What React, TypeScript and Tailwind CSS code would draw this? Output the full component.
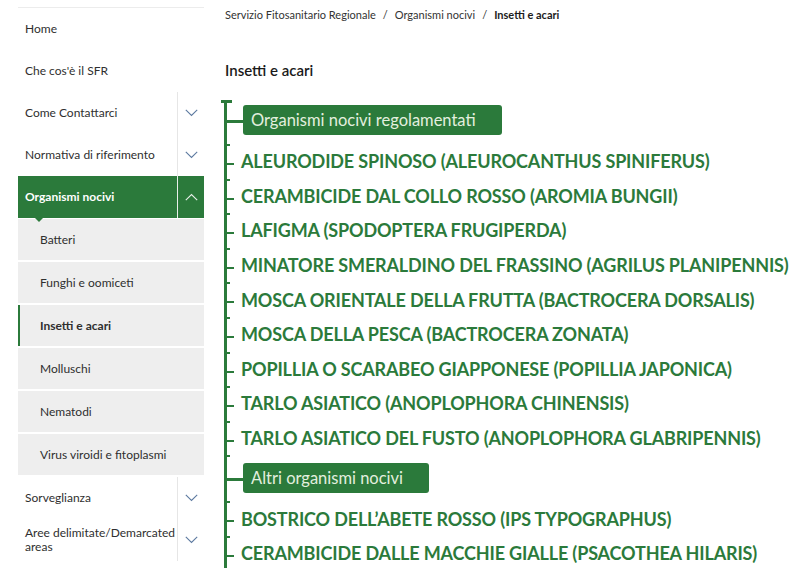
import React from "react";

function Chevron({ up = false, light = false }: { up?: boolean; light?: boolean }) {
  return (
    <svg width="13" height="8" viewBox="0 0 13 8" fill="none">
      <path
        d={up ? "M0.8 7.2 L6.5 1.5 L12.2 7.2" : "M0.8 0.8 L6.5 6.5 L12.2 0.8"}
        stroke={light ? "#e8efe9" : "#5d7aa0"}
        strokeWidth="1.1"
      />
    </svg>
  );
}

function NavRow({ label, chevron = false, second }: { label: string; chevron?: boolean; second?: string }) {
  return (
    <div className="flex h-[42px] items-stretch">
      <div className="flex flex-1 items-center whitespace-nowrap pl-[7px] text-[12px] leading-[14px] text-[#2f2f2f]">
        {second ? (
          <span className="leading-[14px]">
            {label}
            <br />
            {second}
          </span>
        ) : (
          label
        )}
      </div>
      {chevron && (
        <div className="flex w-[27px] items-center justify-center border-l border-[#e6e6e6]">
          <Chevron />
        </div>
      )}
    </div>
  );
}

function SubRow({ label, active = false }: { label: string; active?: boolean }) {
  return (
    <div
      className={`mb-[2px] flex h-[41px] items-center bg-[#eeeeee] text-[12px] text-[#2f2f2f] ${
        active ? "border-l-2 border-[#2b7a3b] pl-[20px] font-bold" : "pl-[22px]"
      }`}
    >
      {label}
    </div>
  );
}

function ItemRow({ label }: { label: string }) {
  return (
    <div className="relative flex h-[34.6px] items-center pl-[14px]">
      <span className="absolute left-0 top-0 h-[2px] w-[3px] bg-[#2b7a3b]" />
      <span className="absolute left-0 top-[19px] h-[2px] w-[7px] bg-[#2b7a3b]" />
      <span className="whitespace-nowrap text-[18px] font-bold leading-none text-[#2b7a3b] tracking-[-0.15px]">
        {label}
      </span>
    </div>
  );
}

function LabelRow({ label, first = false }: { label: string; first?: boolean }) {
  return (
    <div className={`relative flex items-start pl-[16px] ${first ? "h-[44px] pt-[5px]" : "h-[46px] pt-[8px]"}`}>
      {first ? (
        <span className="absolute left-[-6px] top-0 h-[3px] w-[11px] bg-[#2b7a3b]" />
      ) : (
        <span className="absolute left-0 top-0 h-[2px] w-[3px] bg-[#2b7a3b]" />
      )}
      <span className={`absolute left-0 h-[3px] w-[16px] bg-[#2b7a3b] ${first ? "top-[20px]" : "top-[23px]"}`} />
      <div className="flex h-[30px] items-center rounded-[3px] bg-[#2b7a3b] pl-[8px] pr-[26px] text-[16.5px] text-[#e3efdf]">
        {label}
      </div>
    </div>
  );
}

export default function App() {
  const group1 = [
    "ALEURODIDE SPINOSO (ALEUROCANTHUS SPINIFERUS)",
    "CERAMBICIDE DAL COLLO ROSSO (AROMIA BUNGII)",
    "LAFIGMA (SPODOPTERA FRUGIPERDA)",
    "MINATORE SMERALDINO DEL FRASSINO (AGRILUS PLANIPENNIS)",
    "MOSCA ORIENTALE DELLA FRUTTA (BACTROCERA DORSALIS)",
    "MOSCA DELLA PESCA (BACTROCERA ZONATA)",
    "POPILLIA O SCARABEO GIAPPONESE (POPILLIA JAPONICA)",
    "TARLO ASIATICO (ANOPLOPHORA CHINENSIS)",
    "TARLO ASIATICO DEL FUSTO (ANOPLOPHORA GLABRIPENNIS)",
  ];
  const group2 = [
    "BOSTRICO DELL\u2019ABETE ROSSO (IPS TYPOGRAPHUS)",
    "CERAMBICIDE DALLE MACCHIE GIALLE (PSACOTHEA HILARIS)",
  ];
  return (
    <div className="flex h-[568px] w-[801px] overflow-hidden bg-white" style={{ fontFamily: "Lato, 'Noto Sans', sans-serif" }}>
      {/* Sidebar */}
      <div className="ml-[18px] mt-[7px] w-[186px] shrink-0 border-t border-[#ececec]">
        <NavRow label="Home" />
        <NavRow label="Che cos'è il SFR" />
        <NavRow label="Come Contattarci" chevron />
        <NavRow label="Normativa di riferimento" chevron />
        <div className="relative flex h-[42px] items-stretch bg-[#2b7a3b]">
          <div className="flex flex-1 items-center pl-[7px] text-[12px] font-bold text-white">Organismi nocivi</div>
          <div className="flex w-[27px] items-center justify-center border-l border-[#e8efe9]">
            <Chevron up light />
          </div>
          <span className="absolute left-[17px] top-[42px] h-0 w-0 border-l-[4px] border-r-[4px] border-t-[4px] border-l-transparent border-r-transparent border-t-[#2b7a3b]" />
        </div>
        <div className="pt-[1px]">
          <SubRow label="Batteri" />
          <SubRow label="Funghi e oomiceti" />
          <SubRow label="Insetti e acari" active />
          <SubRow label="Molluschi" />
          <SubRow label="Nematodi" />
          <SubRow label="Virus viroidi e fitoplasmi" />
        </div>
        <NavRow label="Sorveglianza" chevron />
        <NavRow label="Aree delimitate/Demarcated" second="areas" chevron />
      </div>

      {/* Main */}
      <div className="min-w-0 flex-1 pl-[21px]">
        <div className="mt-[9px] flex h-[12px] items-center whitespace-nowrap text-[11px] text-[#333]">
          <span>Servizio Fitosanitario Regionale</span>
          <span className="px-[7px]">/</span>
          <span>Organismi nocivi</span>
          <span className="px-[7px]">/</span>
          <span className="font-bold text-[#1c1c1c]">Insetti e acari</span>
        </div>
        <div className="mt-[40px] text-[15px] font-semibold leading-[18px] text-[#1a1a1a]">Insetti e acari</div>
        <div className="ml-[-1px] mt-[21px] border-l-[3px] border-[#2b7a3b]">
          <LabelRow label="Organismi nocivi regolamentati" first />
          {group1.map((g) => (
            <ItemRow key={g} label={g} />
          ))}
          <LabelRow label="Altri organismi nocivi" />
          {group2.map((g) => (
            <ItemRow key={g} label={g} />
          ))}
        </div>
      </div>
    </div>
  );
}
